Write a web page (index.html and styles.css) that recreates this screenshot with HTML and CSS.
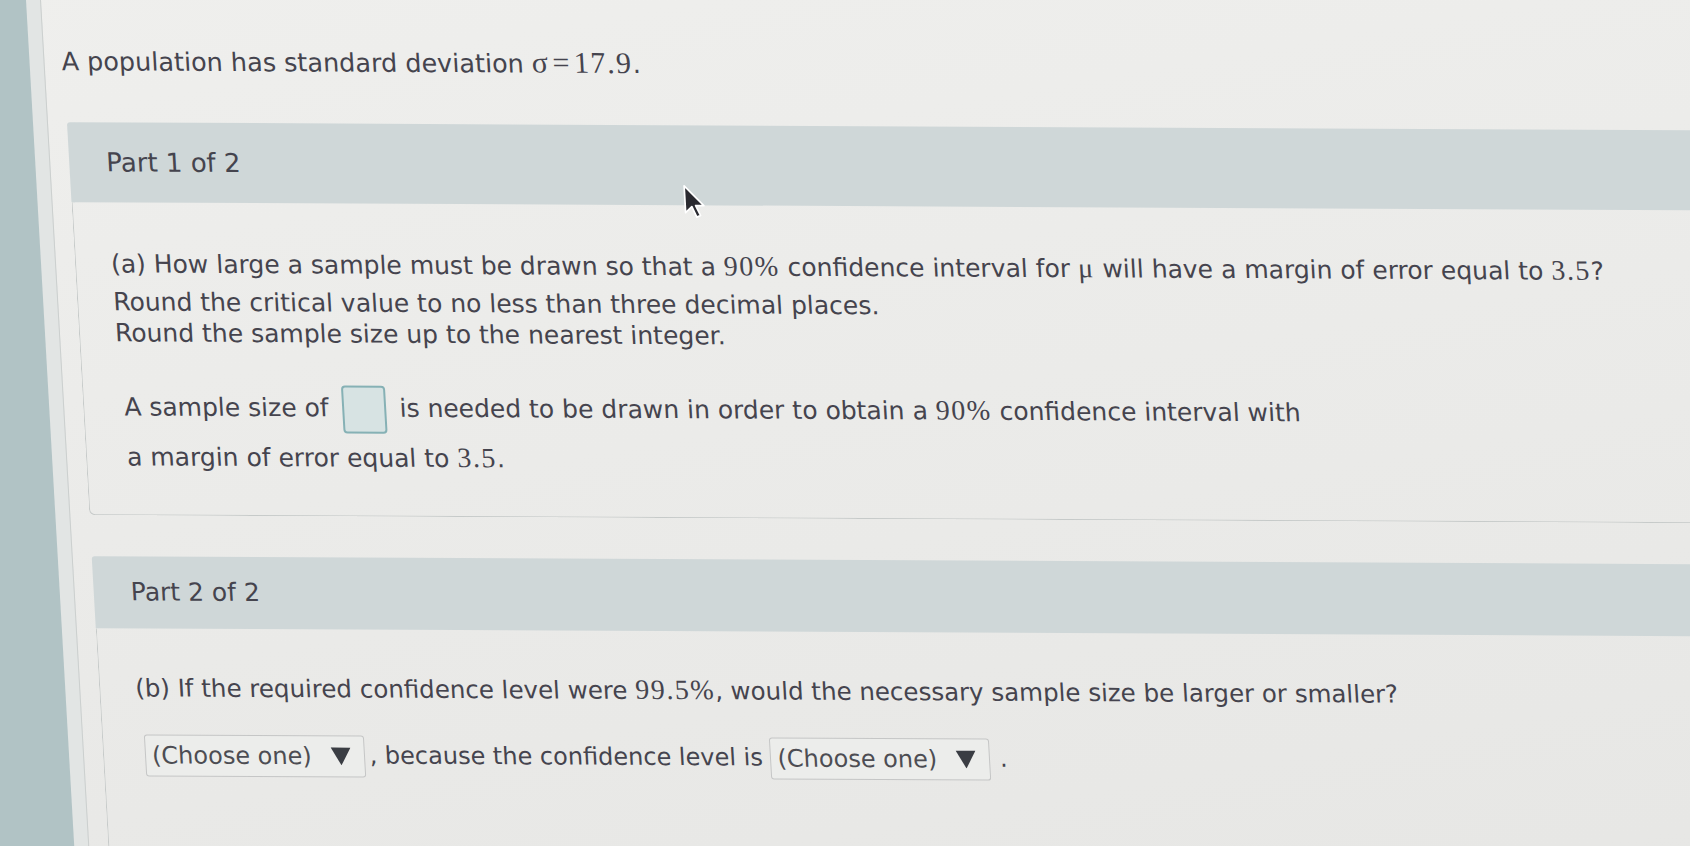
FILE: index.html
```html
<!DOCTYPE html>
<html lang="en">
<head>
<meta charset="utf-8">
<title>Sample size question</title>
<link rel="stylesheet" href="styles.css">
</head>
<body>
<div class="frame">
  <div class="page">
    <div class="title">A population has standard deviation <span class="m mt">σ<span class="eq">=</span>17.9</span>.</div>

    <section class="part part1">
      <div class="head head1">Part 1 of 2</div>
      <div class="body">
        <div class="line l1">(a) How large a sample must be drawn so that a <span class="m">90%</span> confidence interval for <span class="m">μ</span> will have a margin of error equal to <span class="m">3.5</span>?</div>
        <div class="line l2">Round the critical value to no less than three decimal places.</div>
        <div class="line">Round the sample size up to the nearest integer.</div>
        <div class="sent">A sample size of <span class="inbox"></span> is needed to be drawn in order to obtain a <span class="m">90%</span> confidence interval with<br>a margin of error equal to <span class="m">3.5</span>.</div>
      </div>
    </section>

    <section class="part part2">
      <div class="head head2">Part 2 of 2</div>
      <div class="body body2">
        <div class="line l1 lb">(b) If the required confidence level were <span class="m">99.5%</span>, would the necessary sample size be larger or smaller?</div>
        <div class="choice"><span class="select"><span>(Choose one)</span><svg class="tri" width="20" height="18" viewBox="0 0 20 18"><polygon points="0,0 20,0 10,18"/></svg></span><span class="after">, because the confidence level is</span> <span class="select"><span>(Choose one)</span><svg class="tri" width="20" height="18" viewBox="0 0 20 18"><polygon points="0,0 20,0 10,18"/></svg></span> <span class="dot">.</span></div>
      </div>
    </section>

    <svg class="cursor" width="22" height="35" viewBox="0 0 20 32"><path d="M1.5 1.5 V26 L7.5 20.5 L11.5 30 L15 28.5 L11 19.5 H18.5 Z"/></svg>
  </div>
</div>
</body>
</html>
```

FILE: styles.css
```css
html, body {
  margin: 0;
  height: 100%;
}

body {
  background: #b1c3c5;
  overflow: hidden;
  font-family: "DejaVu Sans", Verdana, sans-serif;
  color: #45444e;
}

.frame {
  box-sizing: border-box;
  margin: -30px 0 0 26px;
  padding: 0 0 0 14px;
  width: 1780px;
  height: 960px;
  background: #e2e5e4;
  transform: matrix(1, 0.005, 0.057, 1, 0, 0);
  transform-origin: 0 30px;
}

.page {
  position: relative;
  box-sizing: border-box;
  height: 100%;
  padding-top: 75px;
  border-left: 1px solid #cbcfce;
  background: linear-gradient(170deg, #efefed 0%, #ebebe9 45%, #e6e6e4 100%);
}

.m {
  font-family: "Liberation Serif", "Times New Roman", serif;
  font-size: 28px;
  letter-spacing: 1.5px;
  line-height: 1;
}

.mt {
  font-size: 30px;
}

.eq {
  margin: 0 3px;
}

.title {
  margin-left: 17px;
  font-size: 25.5px;
  line-height: 32px;
}

.part {
  margin-left: 19px;
}

.part1 {
  margin-top: 45px;
}

.part2 {
  margin-top: 41px;
}

.head {
  background: #cfd7d8;
  padding: 24px 0 24px 37px;
  font-size: 25px;
  line-height: 32px;
  border-radius: 3px 0 0 0;
}

.head1 {
  font-size: 26px;
}

.head2 {
  padding-top: 20px;
  padding-bottom: 20px;
}

.body {
  border-left: 1px solid #c6cac9;
  border-bottom: 1px solid #c6cac9;
  border-bottom-left-radius: 6px;
  padding: 46px 0 32px 35px;
}

.body2 {
  border-bottom: none;
  padding-top: 44px;
  height: 300px;
}

.line {
  font-size: 25px;
  line-height: 31px;
}

.l1 {
  line-height: 32px;
}

.lb {
  font-size: 24.5px;
}

.l2 {
  margin-top: 6px;
}

.sent {
  margin: 34px 0 0 5px;
  font-size: 25px;
  line-height: 50px;
}

.inbox {
  display: inline-block;
  box-sizing: border-box;
  width: 44px;
  height: 48px;
  margin: 0 5px 0 6px;
  border: 2px solid #86b1b5;
  border-radius: 4px;
  background: #d7e3e3;
  vertical-align: middle;
}

.choice {
  margin: 25px 0 0 6px;
  font-size: 24px;
  line-height: 50px;
}

.select {
  display: inline-flex;
  align-items: center;
  gap: 19px;
  box-sizing: border-box;
  height: 42px;
  padding: 0 13px 0 6px;
  border: 1px solid #c5c6c6;
  border-radius: 3px;
  background: #ecedeb;
  color: #4d4d53;
  vertical-align: middle;
}

.tri polygon {
  fill: #3a3d43;
}

.after {
  margin-left: 5px;
}

.dot {
  margin-left: 2px;
}

.cursor {
  position: absolute;
  left: 631px;
  top: 211px;
}

.cursor path {
  fill: #2a2a30;
  stroke: #ffffff;
  stroke-width: 1.6;
  stroke-linejoin: round;
}
```
